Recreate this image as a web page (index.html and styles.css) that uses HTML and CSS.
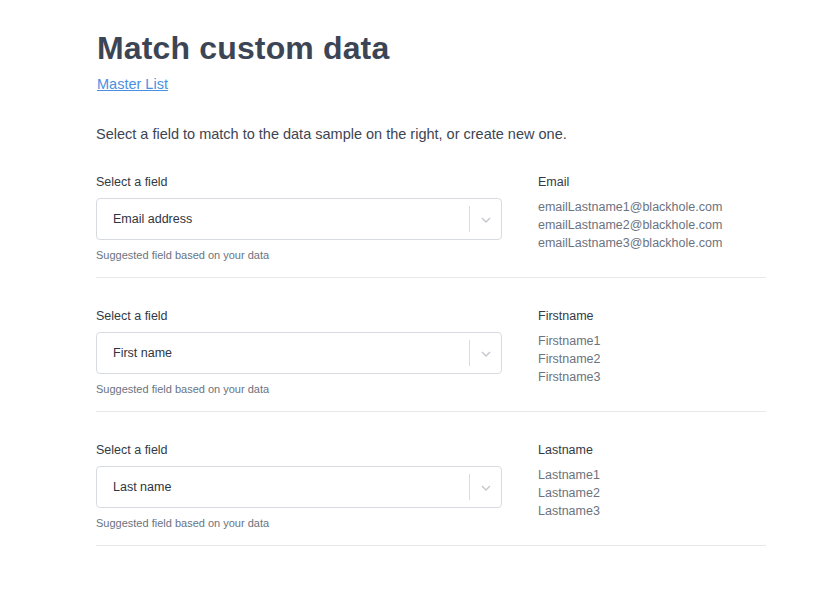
FILE: index.html
```html
<!DOCTYPE html>
<html lang="en">
<head>
<meta charset="utf-8">
<title>Match custom data</title>
<link rel="stylesheet" href="styles.css">
</head>
<body>
<main class="page">
  <h1 class="title">Match custom data</h1>
  <a class="link" href="#">Master List</a>
  <p class="intro">Select a field to match to the data sample on the right, or create new one.</p>

  <section class="row">
    <div class="field">
      <div class="label">Select a field</div>
      <div class="select">
        <span class="select-value">Email address</span>
        <span class="select-sep"></span>
        <span class="select-arrow"><svg width="10" height="6" viewBox="0 0 10 6"><path d="M1 1l4 4 4-4" fill="none" stroke="#c3c7cd" stroke-width="1.4"/></svg></span>
      </div>
      <div class="hint">Suggested field based on your data</div>
    </div>
    <div class="sample">
      <div class="label">Email</div>
      <ul class="values">
        <li>emailLastname1@blackhole.com</li>
        <li>emailLastname2@blackhole.com</li>
        <li>emailLastname3@blackhole.com</li>
      </ul>
    </div>
  </section>

  <section class="row">
    <div class="field">
      <div class="label">Select a field</div>
      <div class="select">
        <span class="select-value">First name</span>
        <span class="select-sep"></span>
        <span class="select-arrow"><svg width="10" height="6" viewBox="0 0 10 6"><path d="M1 1l4 4 4-4" fill="none" stroke="#c3c7cd" stroke-width="1.4"/></svg></span>
      </div>
      <div class="hint">Suggested field based on your data</div>
    </div>
    <div class="sample">
      <div class="label">Firstname</div>
      <ul class="values">
        <li>Firstname1</li>
        <li>Firstname2</li>
        <li>Firstname3</li>
      </ul>
    </div>
  </section>

  <section class="row">
    <div class="field">
      <div class="label">Select a field</div>
      <div class="select">
        <span class="select-value">Last name</span>
        <span class="select-sep"></span>
        <span class="select-arrow"><svg width="10" height="6" viewBox="0 0 10 6"><path d="M1 1l4 4 4-4" fill="none" stroke="#c3c7cd" stroke-width="1.4"/></svg></span>
      </div>
      <div class="hint">Suggested field based on your data</div>
    </div>
    <div class="sample">
      <div class="label">Lastname</div>
      <ul class="values">
        <li>Lastname1</li>
        <li>Lastname2</li>
        <li>Lastname3</li>
      </ul>
    </div>
  </section>
</main>
</body>
</html>
```

FILE: styles.css
```css
* { box-sizing: border-box; }

html, body {
  margin: 0;
  padding: 0;
  background: #ffffff;
}

body {
  font-family: "Liberation Sans", Arial, Helvetica, sans-serif;
  color: #333b47;
}

.page {
  width: 670px;
  margin-left: 96px;
  padding-top: 29px;
  display: flex;
  flex-direction: column;
}

.title {
  margin: 0 0 0 1px;
  font-size: 32px;
  line-height: 38px;
  font-weight: 700;
  color: #3c4555;
  letter-spacing: 0.15px;
}

.link {
  align-self: flex-start;
  margin-top: 7px;
  margin-left: 1px;
  font-size: 14.5px;
  line-height: 20px;
  color: #4a90e2;
  text-decoration: underline;
}

.intro {
  margin: 30px 0 0;
  font-size: 14.5px;
  line-height: 20px;
  color: #3d4552;
}

.row {
  display: flex;
  gap: 36px;
  padding: 29px 0 15px;
  border-bottom: 1px solid #e6e8eb;
}

.field {
  width: 406px;
  display: flex;
  flex-direction: column;
}

.label {
  font-size: 12.5px;
  line-height: 18px;
  color: #333a45;
}

.select {
  margin-top: 7px;
  height: 42px;
  border: 1px solid #d7dbe0;
  border-radius: 4px;
  display: flex;
  align-items: center;
  background: #fff;
}

.select-value {
  flex: 1;
  padding-left: 16px;
  font-size: 12.5px;
  color: #2f3540;
}

.select-sep {
  width: 1px;
  align-self: stretch;
  margin: 7px 0;
  background: #d9dce1;
}

.select-arrow {
  width: 31px;
  display: flex;
  justify-content: center;
  align-items: center;
  padding-top: 1px;
}

.hint {
  margin-top: 8px;
  font-size: 11px;
  line-height: 14px;
  color: #6b7380;
}

.sample {
  flex: 1;
  display: flex;
  flex-direction: column;
}

.values {
  list-style: none;
  margin: 7px 0 0;
  padding: 0;
  font-size: 12.5px;
  line-height: 18px;
  color: #6b7380;
}
```
